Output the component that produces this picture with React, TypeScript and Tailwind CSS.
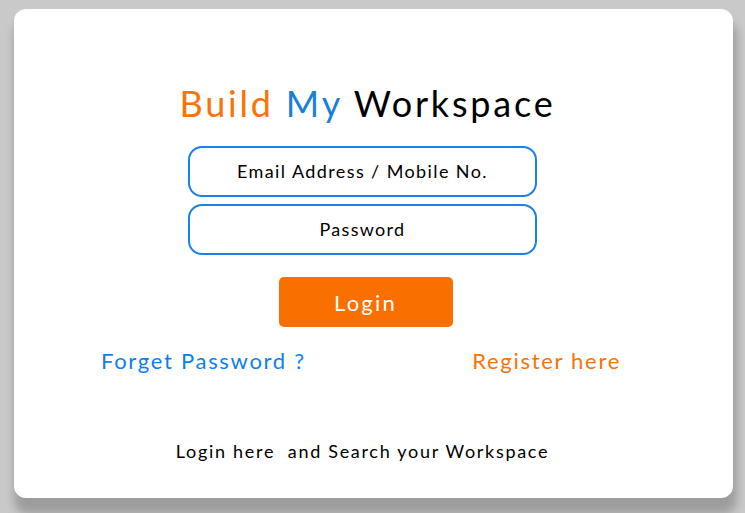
export default function App() {
  return (
    <div className="w-[745px] h-[513px] bg-[#c9c9c9] overflow-hidden pl-[14px] pt-[9px]" style={{ fontFamily: 'Lato, "Noto Sans", sans-serif' }}>
      <div className="w-[719px] h-[489px] bg-white rounded-[12px] shadow-[2px_14px_10px_2px_rgba(0,0,0,0.22)] flex flex-col items-center pr-[22px]">
        <h1 className="mt-[72px] ml-[10px] text-[36px] leading-[44px] tracking-[2.8px]">
          <span className="text-[#f97306]">Build</span>{" "}
          <span className="text-[#1a7fd9]">My</span>{" "}
          <span className="text-black">Workspace</span>
        </h1>
        <div className="mt-[21px] w-[349px] h-[51px] border-2 border-[#1a80ea] rounded-[14px] flex items-center justify-center text-[18px] text-black tracking-[1.4px]">
          Email Address / Mobile No.
        </div>
        <div className="mt-[7px] w-[349px] h-[51px] border-2 border-[#1a80ea] rounded-[14px] flex items-center justify-center text-[18px] text-black tracking-[1.3px]">
          Password
        </div>
        <button className="mt-[22px] ml-[6px] w-[174px] h-[50px] bg-[#fa7000] rounded-[5px] text-white text-[22px] tracking-[2.2px]">
          Login
        </button>
        <div className="mt-[17px] w-full flex justify-between pl-[87px] pr-[90px] text-[22px] tracking-[1.7px]">
          <span className="text-[#0a7ff2]">Forget Password ?</span>
          <span className="text-[#f97306]">Register here</span>
        </div>
        <p className="mt-[61px] text-[18px] text-black tracking-[1.7px] whitespace-pre">
          {"Login here  and Search your Workspace"}
        </p>
      </div>
    </div>
  );
}
